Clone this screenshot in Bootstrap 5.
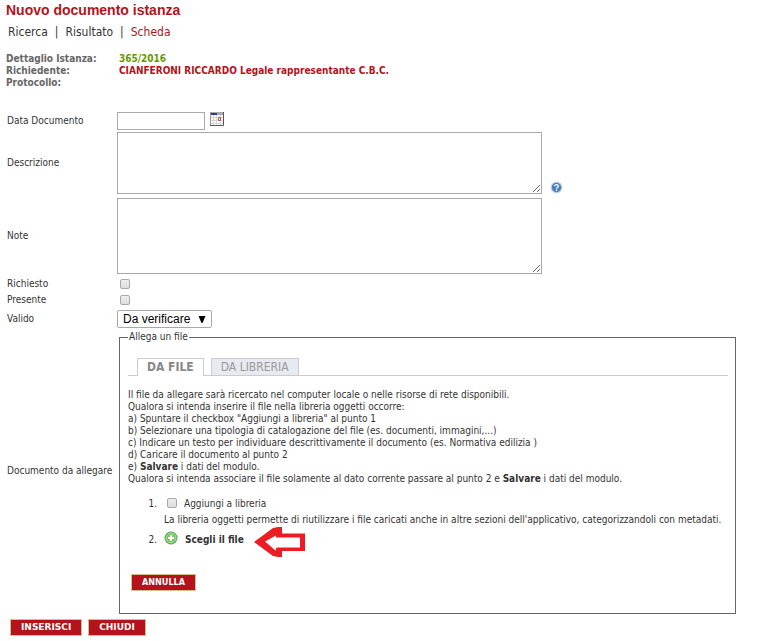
<!DOCTYPE html>
<html lang="it">
<head>
<meta charset="utf-8">
<meta name="viewport" content="width=device-width, initial-scale=1">
<title>Nuovo documento istanza</title>
<link href="https://cdn.jsdelivr.net/npm/bootstrap@5.3.0/dist/css/bootstrap.min.css" rel="stylesheet">
<style>
body{font-family:"DejaVu Sans Condensed","DejaVu Sans",Verdana,sans-serif;font-size:10px;line-height:12px;color:#333;background:#fff}
.page-title{font:bold 14px/20px "Liberation Sans",Arial,sans-serif;color:#b5121b;padding-left:6px;margin:0}
.crumbs{font-size:12px;line-height:16px;padding:4px 8px 0;gap:7px}
.crumbs a{color:#333}
.crumbs a.current{color:#b5121b}
.detail{padding:13px 6px 0;font-weight:bold}
.detail dt{width:113px;color:#666;font-weight:bold}
.detail dd{margin:0;color:#b5121b}
.detail dd.num{color:#690}
.form-body{padding-top:23px;padding-right:30px}
.line{display:flex;align-items:center}
.line>.cap{flex:0 0 117px;padding-left:7px}
.line.near{margin-top:2px}
.field{border:1px solid #a9a9a9;border-radius:0;background:#fff;display:block}
.date{width:88px;height:18px}
.area{width:100%;max-width:425px}
.h-desc{height:62px}
.h-note{height:76px}
.tick{appearance:none;width:10px;height:10px;border:1px solid #a9a9a9;border-radius:2px;background:linear-gradient(#eee,#ddd);margin:0;flex:none}
.tick:checked{background:#666}
.line>.tick{margin:1px 3px}
.state{appearance:none;width:95px;height:18px;border:1px solid #a9a9a9;border-radius:2px;padding:0 0 0 5px;font:12px/16px "Liberation Sans",Arial,sans-serif;color:#000;background:#fff url("data:image/svg+xml,%3Csvg xmlns='http://www.w3.org/2000/svg' width='8' height='7'%3E%3Cpath d='M.5 0h7L4.500 7h-1z'/%3E%3C/svg%3E") no-repeat right 5px center}
.attach{border:1px solid #666;margin:3px 0 0 2px;padding:15px 7px 22px 8px;flex:1}
.attach legend{float:none;width:auto;font-size:10px;line-height:12px;padding:0 1px;margin:0}
.tabbar{border-bottom:1px solid #ccc;padding-left:9px;gap:7px;font-size:12px;line-height:16px}
.tabbar button{border:1px solid #ccc;border-bottom:0;height:17px;padding:0 9px;line-height:17px;color:#999;background:#e7eaf0}
.tabbar button.active{background:#fff;color:#888;font-weight:bold;margin-bottom:-1px;height:18px}
.help-text{padding-top:13px}
.steps{padding-left:32px;margin:13px 0 0}
.steps li{position:relative;padding-left:4px}
.steps li+li{margin-top:5px}
.steps .tick{vertical-align:-1px;margin:0 7px 0 3px}
.steps .plus{display:inline-block;vertical-align:-2px;margin-right:7px}
.arrow{position:absolute;left:93px;top:-5px}
.pick{border:0;background:none;padding:0;font-weight:bold;color:#333}
.act{background:#b5121b;color:#fff;border:1px solid #cdc08a;font-weight:bold;font-size:9px;line-height:15px;height:17px;padding:0 10px}
.cancel{display:block;margin:28px 0 0 3px}
.footer-bar{display:flex;gap:6px;padding:5px 0 0 10px}
.footer-bar .act{font-family:"DejaVu Sans",Verdana,sans-serif}
svg{display:block;flex:none}
</style>
<script src="https://cdn.jsdelivr.net/npm/bootstrap@5.3.0/dist/js/bootstrap.bundle.min.js" defer></script>
</head>
<body>
<h1 class="page-title">Nuovo documento istanza</h1>
<nav class="crumbs d-flex" aria-label="Percorso">
<a class="text-decoration-none" href="#">Ricerca</a><span>|</span><a class="text-decoration-none" href="#">Risultato</a><span>|</span><a class="current text-decoration-none" href="#" aria-current="page">Scheda</a>
</nav>
<dl class="detail m-0">
<div class="d-flex"><dt>Dettaglio Istanza:</dt><dd class="num">365/2016</dd></div>
<div class="d-flex"><dt>Richiedente:</dt><dd>CIANFERONI RICCARDO Legale rappresentante C.B.C.</dd></div>
<div class="d-flex"><dt>Protocollo:</dt><dd></dd></div>
</dl>
<form class="form-body">
<div class="line"><label class="cap" for="data">Data Documento</label><input class="field date" id="data" type="text">
<button class="pick ms-1 mb-1" type="button" aria-label="Calendario"><svg width="16" height="14" viewBox="0 0 16 14"><path fill="#fff" d="M1 0h14v14H1z"/><path stroke="#d8d8d8" d="M2 5.500h12M2 8.500h12M2 11.500h12M4.500 3v10M7.500 3v10M11.500 3v10"/><path fill="#aaa" d="M1 0h14v3H1z"/><path fill="#2b35c4" d="M2 1h6v2H2z"/><path fill="none" stroke="#999" d="M1.500 0v13"/><path fill="none" stroke="#555" d="M1 13.500h13.500V0"/><path fill="none" stroke="#c0504d" d="M9.500 5.500h2v3h-2z"/></svg></button></div>
<div class="line near"><label class="cap" for="desc">Descrizione</label><textarea class="field area h-desc" id="desc"></textarea>
<button class="pick align-self-end ms-2" type="button" aria-label="Aiuto"><svg width="13" height="13" viewBox="0 0 13 13"><circle cx="6.500" cy="6.500" r="6" fill="#c3d5ea"/><circle cx="6.500" cy="6.500" r="4.700" fill="#4d7fb9"/><path fill="none" stroke="#fff" stroke-width="1.300" d="M4.800 5.200c0-2.200 3.600-2.100 3.500 0 0 1.100-1.700 1.100-1.700 2.500M6.600 8.600v1.300"/></svg></button></div>
<div class="line mt-1"><label class="cap" for="note">Note</label><textarea class="field area h-note" id="note"></textarea></div>
<div class="line mt-1"><label class="cap" for="rich">Richiesto</label><input class="tick" id="rich" type="checkbox"></div>
<div class="line mt-1"><label class="cap" for="pres">Presente</label><input class="tick" id="pres" type="checkbox"></div>
<div class="line mt-1"><label class="cap" for="valido">Valido</label><select class="state" id="valido"><option>Da verificare</option></select></div>
<div class="line"><span class="cap">Documento da allegare</span>
<fieldset class="attach"><legend>Allega un file</legend>
<div class="tabbar d-flex align-items-end" role="tablist"><button class="active" type="button" role="tab" aria-selected="true">DA FILE</button><button type="button" role="tab" aria-selected="false">DA LIBRERIA</button></div>
<div class="help-text">Il file da allegare sarà ricercato nel computer locale o nelle risorse di rete disponibili.<br>Qualora si intenda inserire il file nella libreria oggetti occorre:<br>a) Spuntare il checkbox "Aggiungi a libreria" al punto 1<br>b) Selezionare una tipologia di catalogazione del file (es. documenti, immagini,...)<br>c) Indicare un testo per individuare descrittivamente il documento (es. Normativa edilizia )<br>d) Caricare il documento al punto 2<br>e) <b>Salvare</b> i dati del modulo.<br>Qualora si intenda associare il file solamente al dato corrente passare al punto 2 e <b>Salvare</b> i dati del modulo.</div>
<ol class="steps">
<li><input class="tick" id="lib" type="checkbox"><label for="lib">Aggiungi a libreria</label><div class="mt-1">La libreria oggetti permette di riutilizzare i file caricati anche in altre sezioni dell'applicativo, categorizzandoli con metadati.</div></li>
<li><svg class="plus" width="14" height="14" viewBox="0 0 14 14"><circle cx="7" cy="7" r="6.500" fill="#4fa548"/><circle cx="7" cy="7" r="5" fill="#7cc464" stroke="#b5e0ac"/><path stroke="#fff" stroke-width="2" d="M7 4v6M4 7h6"/></svg><button class="pick" type="button">Scegli il file</button><svg class="arrow" width="52" height="32" viewBox="0 0 52 32"><path fill="#ed1c24" d="M1 16 20 2l5-1h4v6.500h23V25H29v6h-4l-5-1z"/><path fill="#fff" d="m12 15.500 11-6v2h24v10H23.500l-1 3z"/></svg></li>
</ol>
<button class="act cancel" type="button">ANNULLA</button>
</fieldset></div>
<div class="footer-bar"><button class="act" type="submit">INSERISCI</button><button class="act" type="button">CHIUDI</button></div>
</form>
</body>
</html>
